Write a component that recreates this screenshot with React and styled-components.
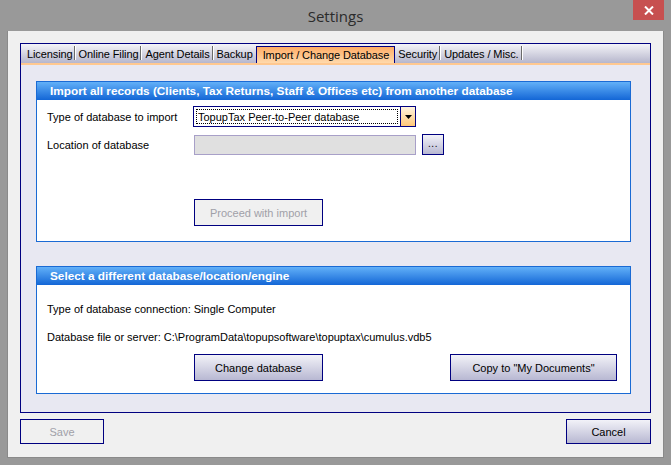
import React from "react";
import styled, { createGlobalStyle } from "styled-components";

const Global = createGlobalStyle`
  *, *::before, *::after { box-sizing: border-box; }
  html, body { margin: 0; padding: 0; background: #999999; }
  body { font-family: "Liberation Sans", Arial, sans-serif; font-size: 11px; color: #000; }
`;

const Window = styled.div`
  width: 671px;
  height: 465px;
  background: #999999;
  display: flex;
  flex-direction: column;
`;

const TitleBar = styled.div`
  height: 31px;
  display: grid;
  grid-template-columns: 1fr auto 1fr;
  align-items: start;
`;

const Title = styled.div`
  grid-column: 2;
  font-family: "Open Sans", "Noto Sans", sans-serif;
  font-size: 15px;
  color: #2b2b2b;
  line-height: 31px;
  padding-top: 1px;
`;

const CloseButton = styled.div`
  grid-column: 3;
  justify-self: end;
  margin-right: 7px;
  width: 31px;
  height: 20px;
  background: #c75050;
  display: flex;
  align-items: center;
  justify-content: center;
`;

const Client = styled.div`
  flex: 1;
  margin: 0 7px 7px;
  border: 1px solid #8a8a8a;
  border-top: none;
  background: #f0f0f0;
  padding: 12px 12px 0 12px;
  display: flex;
  flex-direction: column;
`;

const TabControl = styled.div`
  height: 370px;
  border: 1px solid #000080;
  display: flex;
  flex-direction: column;
`;

const TabStrip = styled.div`
  height: 21px;
  border-bottom: 2px solid #ffc890;
  background: linear-gradient(#f4f4f8, #b6b6cc);
  display: flex;
  align-items: flex-end;
  letter-spacing: -0.1px;
`;

const Tab = styled.div`
  height: ${(p) => (p.$active ? "17px" : "19px")};
  display: flex;
  align-items: center;
  padding: ${(p) => (p.$active ? "0 5px 0 6px" : `0 0 0 ${p.$first ? 6 : p.$afterActive ? 3 : 4}px`)};
  white-space: nowrap;
  color: #000;
  background: ${(p) => (p.$active ? "linear-gradient(#ffad66, #ffd9ac)" : "transparent")};
  border: ${(p) => (p.$active ? "1px solid #000080" : "none")};
  border-bottom: none;
  margin-left: ${(p) => (p.$active ? "3px" : "0")};
`;

const Sep = styled.span`
  display: inline-block;
  width: 1px;
  height: 14px;
  background: #6a6a6a;
  box-shadow: 1px 0 0 #ffffff;
  margin-left: ${(p) => p.$gap}px;
  margin-bottom: 1px;
`;

const TabBody = styled.div`
  flex: 1;
  background: #e8e8f2;
  padding: 16px 19px 0 15px;
  display: flex;
  flex-direction: column;
  gap: 24px;
`;

const Group = styled.div`
  height: ${(p) => p.$h}px;
  border: 1px solid #1a6ad4;
  background: #ffffff;
  display: flex;
  flex-direction: column;
`;

const GroupHeader = styled.div`
  height: 18px;
  background: linear-gradient(#62b0f8, #1366d6);
  color: #ffffff;
  font-weight: bold;
  font-size: 11.8px;
  padding-left: 13px;
  display: flex;
  align-items: center;
  white-space: nowrap;
`;

const ImportBody = styled.div`
  padding: 6px 0 0 10px;
  display: grid;
  grid-template-columns: 146px 223px auto;
  row-gap: 7px;
  align-items: center;
`;

const Label = styled.div`
  white-space: nowrap;
`;

const Select = styled.div`
  height: 21px;
  border: 1px solid #000080;
  background: #ffffff;
  display: flex;
  align-items: stretch;
`;

const SelectValue = styled.div`
  flex: 1;
  margin: 2px;
  border: 1px dotted #000;
  display: flex;
  align-items: center;
  padding-left: 1px;
  white-space: nowrap;
`;

const DropButton = styled.div`
  width: 15px;
  border-left: 1px solid #000080;
  background: linear-gradient(#fff4e0, #ffc878);
  display: flex;
  align-items: center;
  justify-content: center;
`;

const Input = styled.div`
  height: 20px;
  margin-left: 1px;
  border: 1px solid #a8a0c8;
  background: #e0e0e0;
`;

const Button = styled.div`
  width: ${(p) => p.$w}px;
  height: ${(p) => p.$h || 27}px;
  border: 1px solid #000080;
  background: ${(p) => (p.$disabled ? "#f0f0f0" : "linear-gradient(#f2f2f8, #b8b8d2)")};
  color: ${(p) => (p.$disabled ? "#a0a0a8" : "#000")};
  display: flex;
  align-items: center;
  justify-content: center;
  white-space: nowrap;
  font-size: 11px;
`;

const DotsButton = styled(Button)`
  margin-left: 6px;
  height: 21px;
  align-items: flex-end;
  padding-bottom: 5px;
  font-size: 10px;
  line-height: 1;
  letter-spacing: 0.5px;
`;

const ProceedRow = styled.div`
  grid-column: 2;
  padding-top: 37px;
  padding-left: 1px;
`;

const SwitchBody = styled.div`
  padding: 17px 13px 0 10px;
  display: flex;
  flex-direction: column;
`;

const InfoLine = styled.div`
  height: 14px;
  line-height: 14px;
  white-space: nowrap;
  margin-bottom: 14px;
`;

const ButtonRow = styled.div`
  display: flex;
  justify-content: space-between;
  padding-left: 147px;
  margin-top: -4px;
`;

const Footer = styled.div`
  margin-top: 6px;
  display: flex;
  justify-content: space-between;
`;

const tabs = [
  "Licensing",
  "Online Filing",
  "Agent Details",
  "Backup",
  "Import / Change Database",
  "Security",
  "Updates / Misc.",
];
const ACTIVE = 4;

export default function App() {
  return (
    <>
      <Global />
      <Window>
        <TitleBar>
          <Title>Settings</Title>
          <CloseButton>
            <svg width="10" height="9" viewBox="0 0 10 9">
              <path d="M1 0.5 L9 8.5 M9 0.5 L1 8.5" stroke="#fff" strokeWidth="2" />
            </svg>
          </CloseButton>
        </TitleBar>
        <Client>
          <TabControl>
            <TabStrip>
              {tabs.map((t, i) => (
                <Tab
                  key={t}
                  $active={i === ACTIVE}
                  $first={i === 0}
                  $afterActive={i === ACTIVE + 1}
                >
                  {t}
                  {i !== ACTIVE && i !== ACTIVE - 1 && <Sep $gap={i === 0 ? 1 : 2} />}
                </Tab>
              ))}
            </TabStrip>
            <TabBody>
              <Group $h={161}>
                <GroupHeader>
                  Import all records (Clients, Tax Returns, Staff &amp; Offices etc) from another database
                </GroupHeader>
                <ImportBody>
                  <Label>Type of database to import</Label>
                  <Select>
                    <SelectValue>TopupTax Peer-to-Peer database</SelectValue>
                    <DropButton>
                      <svg width="7" height="4" viewBox="0 0 7 4">
                        <path d="M0 0 H7 L3.5 4 Z" fill="#000" />
                      </svg>
                    </DropButton>
                  </Select>
                  <span />
                  <Label>Location of database</Label>
                  <Input />
                  <DotsButton $w={22}>...</DotsButton>
                  <ProceedRow>
                    <Button $w={129} $disabled>
                      Proceed with import
                    </Button>
                  </ProceedRow>
                </ImportBody>
              </Group>
              <Group $h={128}>
                <GroupHeader>Select a different database/location/engine</GroupHeader>
                <SwitchBody>
                  <InfoLine>Type of database connection: Single Computer</InfoLine>
                  <InfoLine>
                    Database file or server: C:\ProgramData\topupsoftware\topuptax\cumulus.vdb5
                  </InfoLine>
                  <ButtonRow>
                    <Button $w={129}>Change database</Button>
                    <Button $w={167}>Copy to "My Documents"</Button>
                  </ButtonRow>
                </SwitchBody>
              </Group>
            </TabBody>
          </TabControl>
          <Footer>
            <Button $w={84} $h={25} $disabled>Save</Button>
            <Button $w={85} $h={25}>Cancel</Button>
          </Footer>
        </Client>
      </Window>
    </>
  );
}
